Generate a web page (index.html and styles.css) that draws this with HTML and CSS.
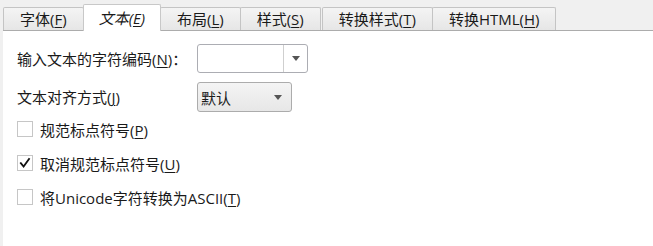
FILE: index.html
```html
<!DOCTYPE html>
<html lang="zh-CN">
<head>
<meta charset="utf-8">
<link rel="stylesheet" href="styles.css">
</head>
<body>
<div class="dialog">
  <div class="tabs">
    <div class="tab">字体(<u>F</u>)</div>
    <div class="tab tab-active"><i>文本(<u>E</u>)</i></div>
    <div class="tab">布局(<u>L</u>)</div>
    <div class="tab">样式(<u>S</u>)</div>
    <div class="tab tab-gap">转换样式(<u>T</u>)</div>
    <div class="tab">转换HTML(<u>H</u>)</div>
  </div>
  <div class="panel">
    <div class="field-grid">
      <label class="label">输入文本的字符编码(<u>N</u>)：</label>
      <div class="combo combo-edit">
        <span class="combo-text"></span>
        <span class="combo-btn"><span class="arrow"></span></span>
      </div>
      <label class="label">文本对齐方式(<u>J</u>)</label>
      <div class="combo combo-list">
        <span class="combo-text">默认</span>
        <span class="combo-btn plain"><span class="arrow"></span></span>
      </div>
    </div>
    <div class="check-row">
      <span class="box"></span>
      <span class="check-label">规范标点符号(<u>P</u>)</span>
    </div>
    <div class="check-row">
      <span class="box">
        <svg viewBox="0 0 16 16" width="16" height="16"><path d="M3.2 8.2 L6.4 12 L12.6 3.4" fill="none" stroke="#111" stroke-width="2.1" stroke-linecap="square" stroke-linejoin="miter"/></svg>
      </span>
      <span class="check-label">取消规范标点符号(<u>U</u>)</span>
    </div>
    <div class="check-row">
      <span class="box"></span>
      <span class="check-label">将Unicode字符转换为ASCII(<u>T</u>)</span>
    </div>
  </div>
</div>
</body>
</html>
```

FILE: styles.css
```css
html, body {
  margin: 0;
  padding: 0;
  height: 100%;
}
body {
  background: #f0f0f0;
  font-family: "Open Sans", "Noto Sans CJK SC", sans-serif;
  font-size: 15px;
  color: #1a1a1a;
}
.dialog {
  display: flex;
  flex-direction: column;
  height: 246px;
}
.tabs {
  display: flex;
  align-items: flex-end;
  height: 30px;
  padding-left: 3px;
  position: relative;
  z-index: 2;
}
.tab {
  box-sizing: border-box;
  height: 23px;
  padding: 0 16px;
  border: 1px solid #c4c4c4;
  border-bottom: none;
  border-radius: 2px 2px 0 0;
  background: linear-gradient(#f4f4f4, #e6e6e6);
  display: flex;
  align-items: center;
  justify-content: center;
  line-height: 1;
  margin-right: -1px;
  white-space: nowrap;
}
.tab-active {
  height: 27px;
  margin-bottom: -1px;
  background: #ffffff;
  border-color: #c8c8c8;
  padding: 0 15px;
  position: relative;
  z-index: 3;
}
.tab-active i {
  font-style: italic;
}
.tab-gap {
  margin-left: 2px;
}
u {
  text-decoration: underline;
  text-underline-offset: 2px;
}
.panel {
  flex: 1;
  background: #ffffff;
  border-top: 1px solid #acacac;
  margin-left: 3px;
  padding: 13px 0 0 14px;
  position: relative;
  z-index: 1;
}
.field-grid {
  display: grid;
  grid-template-columns: 180px auto;
  row-gap: 9px;
  align-items: center;
  justify-items: start;
}
.label {
  white-space: nowrap;
  line-height: 20px;
}
.combo {
  box-sizing: border-box;
  display: flex;
  align-items: stretch;
  border: 1px solid #acadb3;
  border-radius: 3px;
}
.combo-edit {
  width: 111px;
  height: 29px;
  background: #fff;
}
.combo-list {
  width: 95px;
  height: 30px;
  background: linear-gradient(#f4f4f4, #e7e7e7);
  border-color: #acacac;
}
.combo-text {
  flex: 1;
  display: flex;
  align-items: center;
  padding-left: 3px;
}
.combo-btn {
  width: 23px;
  display: flex;
  align-items: center;
  justify-content: center;
  border-left: 1px solid #cfcfcf;
}
.combo-btn.plain {
  border-left: none;
  width: 26px;
}
.arrow {
  width: 0;
  height: 0;
  border-left: 4.5px solid transparent;
  border-right: 4.5px solid transparent;
  border-top: 5px solid #555;
}
.check-row {
  display: flex;
  align-items: center;
  height: 34px;
}
.check-row:first-of-type {
  margin-top: 4px;
}
.box {
  box-sizing: border-box;
  width: 16px;
  height: 16px;
  border: 1px solid #c6c6c6;
  background: #fff;
  display: flex;
  align-items: center;
  justify-content: center;
  margin-right: 7px;
}
.box svg {
  display: block;
}
.check-label {
  white-space: nowrap;
}
```
